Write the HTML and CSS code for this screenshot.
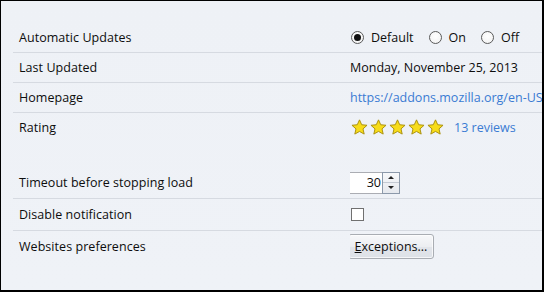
FILE: index.html
```html
<!DOCTYPE html>
<html lang="en">
<head>
    <meta charset="UTF-8">
    <title>Add-on Details</title>
    <link rel="stylesheet" href="styles.css">
</head>
<body>
    <div class="pane">
        <div class="group">
            <div class="row">
                <div class="label">Automatic Updates</div>
                <div class="value radios">
                    <label class="radio"><span class="dot checked"></span>Default</label>
                    <label class="radio"><span class="dot"></span>On</label>
                    <label class="radio"><span class="dot"></span>Off</label>
                </div>
            </div>
            <div class="row">
                <div class="label">Last Updated</div>
                <div class="value">Monday, November 25, 2013</div>
            </div>
            <div class="row">
                <div class="label">Homepage</div>
                <div class="value"><a class="link" href="#">https://addons.mozilla.org/en-US/</a></div>
            </div>
            <div class="row last">
                <div class="label">Rating</div>
                <div class="value rating">
                    <span class="stars">
                        <svg viewBox="0 0 16 16"><path class="star" d="M8 .8l2.1 4.6 5 .5-3.8 3.4 1.1 4.9L8 11.7l-4.4 2.5 1.1-4.9L.9 5.9l5-.5z"/></svg>
                        <svg viewBox="0 0 16 16"><path class="star" d="M8 .8l2.1 4.6 5 .5-3.8 3.4 1.1 4.9L8 11.7l-4.4 2.5 1.1-4.9L.9 5.9l5-.5z"/></svg>
                        <svg viewBox="0 0 16 16"><path class="star" d="M8 .8l2.1 4.6 5 .5-3.8 3.4 1.1 4.9L8 11.7l-4.4 2.5 1.1-4.9L.9 5.9l5-.5z"/></svg>
                        <svg viewBox="0 0 16 16"><path class="star" d="M8 .8l2.1 4.6 5 .5-3.8 3.4 1.1 4.9L8 11.7l-4.4 2.5 1.1-4.9L.9 5.9l5-.5z"/></svg>
                        <svg viewBox="0 0 16 16"><path class="star" d="M8 .8l2.1 4.6 5 .5-3.8 3.4 1.1 4.9L8 11.7l-4.4 2.5 1.1-4.9L.9 5.9l5-.5z"/></svg>
                    </span>
                    <a class="link" href="#">13 reviews</a>
                </div>
            </div>
        </div>

        <div class="group prefs">
            <div class="row">
                <div class="label">Timeout before stopping load</div>
                <div class="value">
                    <div class="spinner">
                        <span class="num">30</span>
                        <span class="spin">
                            <span class="up"></span>
                            <span class="down"></span>
                        </span>
                    </div>
                </div>
            </div>
            <div class="row">
                <div class="label">Disable notification</div>
                <div class="value"><span class="checkbox"></span></div>
            </div>
            <div class="row last">
                <div class="label">Websites preferences</div>
                <div class="value"><button class="btn"><u>E</u>xceptions...</button></div>
            </div>
        </div>
    </div>
</body>
</html>
```

FILE: styles.css
```css
html, body {
    margin: 0;
    padding: 0;
}
body {
    font-family: "Open Sans", "Noto Sans", sans-serif;
    font-size: 12.5px;
    color: #0d0d0d;
}
.pane {
    box-sizing: border-box;
    width: 544px;
    height: 292px;
    border-style: solid;
    border-color: #000;
    border-width: 1px 2px 2px 1px;
    background: linear-gradient(to bottom, #eef1f6, #eff2f7);
    padding: 22px 0 0 12px;
    overflow: hidden;
}
.group {
    display: flex;
    flex-direction: column;
}
.prefs {
    margin-top: 25px;
}
.row {
    display: grid;
    grid-template-columns: 337px 1fr;
    align-items: center;
    height: 29px;
    border-bottom: 1px solid #d6dae1;
    white-space: nowrap;
}
.prefs .row {
    height: 31px;
}
.row.last {
    border-bottom: none;
}
.label {
    padding-left: 6px;
    letter-spacing: 0.05px;
}
.value {
    overflow: hidden;
}
.link {
    color: #3a7bd3;
    text-decoration: none;
}

/* radio group */
.radios {
    display: flex;
    align-items: center;
    padding-left: 1px;
}
.radio {
    display: flex;
    align-items: center;
    margin-right: 15px;
}
.dot {
    box-sizing: border-box;
    width: 13px;
    height: 13px;
    border: 1px solid #5a5a5a;
    border-radius: 50%;
    background: radial-gradient(circle at 50% 40%, #fff, #f0f0f0);
    margin-right: 7px;
    position: relative;
}
.dot.checked::after {
    content: "";
    position: absolute;
    left: 2px;
    top: 2px;
    width: 7px;
    height: 7px;
    border-radius: 50%;
    background: #111;
}

/* rating */
.rating {
    display: flex;
    align-items: center;
    padding-left: 1px;
}
.stars {
    display: flex;
    gap: 2px;
    margin-right: 10px;
}
.stars svg {
    width: 17px;
    height: 17px;
}
.star {
    fill: #f7dc1a;
    stroke: #a88f0c;
    stroke-width: 0.9;
    stroke-linejoin: round;
}

/* number spinner */
.spinner {
    display: flex;
    width: 53px;
    height: 22px;
    margin-left: -3px;
    box-sizing: border-box;
    border: 1px solid #abadb3;
    background: #fff;
}
.num {
    flex: 1;
    text-align: right;
    line-height: 20px;
    padding-right: 1px;
}
.spin {
    display: flex;
    flex-direction: column;
    width: 16px;
    margin: -1px -1px -1px 0;
    border: 1px solid #8c99aa;
    background: linear-gradient(#f7f8fa, #e6e9ee);
}
.spin span {
    flex: 1;
    display: flex;
    align-items: center;
    justify-content: center;
}
.spin span + span {
    border-top: 1px solid #c4cad3;
}
.up::before {
    content: "";
    border-left: 3px solid transparent;
    border-right: 3px solid transparent;
    border-bottom: 3px solid #222;
}
.down::before {
    content: "";
    border-left: 3px solid transparent;
    border-right: 3px solid transparent;
    border-top: 3px solid #222;
}

/* checkbox */
.checkbox {
    display: block;
    box-sizing: border-box;
    width: 13px;
    height: 13px;
    margin-left: 1px;
    border: 1px solid #707070;
    background: #fff;
}

/* button */
.btn {
    box-sizing: border-box;
    width: 86px;
    height: 25px;
    margin-left: -2px;
    padding: 0 0 1px;
    font-family: inherit;
    font-size: inherit;
    color: #0d0d0d;
    border: 1px solid #a9adb3;
    border-radius: 3px;
    background: linear-gradient(#f7f8fa, #eceef1 50%, #e2e5ea 50%, #dde1e7);
    box-shadow: inset 0 0 0 1px rgba(255, 255, 255, 0.7);
}
.btn u {
    text-decoration-thickness: 1px;
}
```
